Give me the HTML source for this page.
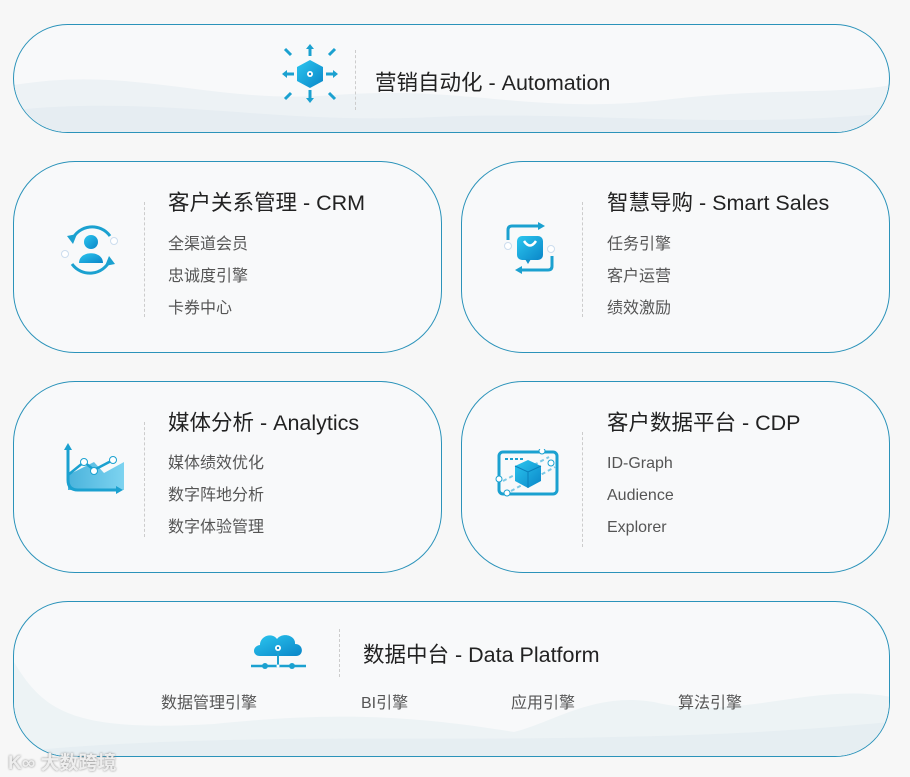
<!DOCTYPE html>
<html><head><meta charset="utf-8"><style>
body{margin:0;width:910px;height:777px;background:#f7f7f7;position:relative;overflow:hidden;font-family:"Liberation Sans","Noto Sans CJK SC",sans-serif;}
.card{position:absolute;box-sizing:border-box;border:1.5px solid #2b93ba;background:#f8f9fa;overflow:hidden}
.t{position:absolute;font-size:21.5px;color:#222;white-space:nowrap}
.i{position:absolute;font-size:16px;color:#555;line-height:32px;white-space:nowrap}
.sep{position:absolute;border-left:1.5px dashed #ccc;width:0}
svg{position:absolute}
</style></head><body>
<svg width="0" height="0"><defs>
<linearGradient id="g" x1="0" y1="0" x2="1" y2="1"><stop offset="0" stop-color="#2cc6ef"/><stop offset="1" stop-color="#0a86c8"/></linearGradient>
<linearGradient id="g2" x1="0" y1="0" x2="1" y2="0"><stop offset="0" stop-color="#4ab3dc"/><stop offset="1" stop-color="#7dd3f0"/></linearGradient>
</defs></svg>

<div class="card" style="left:13px;top:24px;width:877px;height:109px;border-radius:55px">
<svg width="877" height="109" style="left:0;top:0"><path d="M0 60 C120 40 200 80 320 70 C450 60 520 90 650 75 C760 62 820 70 877 60 L877 109 L0 109Z" fill="#edf2f5"/><path d="M0 85 C150 70 260 100 420 92 C560 85 700 105 877 88 L877 109 L0 109Z" fill="#e6edf2"/></svg>
</div>
<svg width="60" height="64" style="left:280px;top:42px" viewBox="0 0 60 64">
<g stroke="#1ba1d0" stroke-width="3" fill="#1ba1d0">
<line x1="30" y1="14" x2="30" y2="5"/><path d="M26 7 L30 2 L34 7Z" stroke="none"/>
<line x1="30" y1="48" x2="30" y2="58"/><path d="M26 56 L30 61 L34 56Z" stroke="none"/>
<line x1="14" y1="32" x2="5" y2="32"/><path d="M7 28 L2 32 L7 36Z" stroke="none"/>
<line x1="46" y1="32" x2="55" y2="32"/><path d="M53 28 L58 32 L53 36Z" stroke="none"/>
<line x1="11" y1="13" x2="5" y2="7"/><line x1="49" y1="13" x2="55" y2="7"/><line x1="11" y1="51" x2="5" y2="57"/><line x1="49" y1="51" x2="55" y2="57"/>
</g>
<path d="M30 18 L43 25 L43 39 L30 46 L17 39 L17 25Z" fill="url(#g)"/>
<circle cx="30" cy="32" r="3" fill="#fff"/><circle cx="30" cy="32" r="1.2" fill="#0a86c8"/>
</svg>
<div class="sep" style="left:355px;top:50px;height:60px"></div>
<div class="t" style="left:375px;top:66px">营销自动化 - Automation</div>

<div class="card" style="left:13px;top:161px;width:429px;height:192px;border-radius:62px"></div>
<svg width="66" height="60" style="left:58px;top:220px" viewBox="0 0 66 60">
<path d="M14 20 A22 22 0 0 1 52 16" fill="none" stroke="#1ba1d0" stroke-width="3"/>
<path d="M52 40 A22 22 0 0 1 14 44" fill="none" stroke="#1ba1d0" stroke-width="3"/>
<path d="M9 16 L15 24 L19 14Z" fill="#1ba1d0"/><path d="M57 44 L51 36 L47 46Z" fill="#1ba1d0"/>
<circle cx="33" cy="22" r="7" fill="url(#g)"/><path d="M21 43 C21 30 45 30 45 43Z" fill="url(#g)"/>
<circle cx="56" cy="21" r="3.5" fill="#fff" stroke="#cde"/><circle cx="7" cy="34" r="3.5" fill="#fff" stroke="#cde"/>
</svg>
<div class="sep" style="left:144px;top:202px;height:115px"></div>
<div class="t" style="left:168px;top:186px">客户关系管理 - CRM</div>
<div class="i" style="left:168px;top:229px">全渠道会员<br>忠诚度引擎<br>卡券中心</div>

<div class="card" style="left:461px;top:161px;width:429px;height:192px;border-radius:62px"></div>
<svg width="60" height="60" style="left:500px;top:218px" viewBox="0 0 60 60">
<path d="M8 22 V12 Q8 8 12 8 H40" fill="none" stroke="#1ba1d0" stroke-width="3"/><path d="M38 4 L45 8 L38 12Z" fill="#1ba1d0"/>
<path d="M52 38 V48 Q52 52 48 52 H20" fill="none" stroke="#1ba1d0" stroke-width="3"/><path d="M22 48 L15 52 L22 56Z" fill="#1ba1d0"/>
<rect x="17" y="18" width="26" height="24" rx="5" fill="url(#g)"/><path d="M25 41 L28 46 L31 41Z" fill="#1593cc"/>
<path d="M24 23 Q30 32 36 23" fill="none" stroke="#fff" stroke-width="2.5"/>
<circle cx="8" cy="28" r="3.5" fill="#fff" stroke="#cde"/><circle cx="51" cy="31" r="3.5" fill="#fff" stroke="#cde"/>
</svg>
<div class="sep" style="left:582px;top:202px;height:115px"></div>
<div class="t" style="left:607px;top:186px">智慧导购 - Smart Sales</div>
<div class="i" style="left:607px;top:229px">任务引擎<br>客户运营<br>绩效激励</div>

<div class="card" style="left:13px;top:381px;width:429px;height:192px;border-radius:62px"></div>
<svg width="70" height="60" style="left:58px;top:440px" viewBox="0 0 70 60">
<path d="M10 35 L36 22 L46 33 L66 22 L66 50 L10 50Z" fill="url(#g2)"/>
<path d="M10 8 V40 Q10 50 20 50 H60" fill="none" stroke="#1ba1d0" stroke-width="3"/>
<path d="M6 10 L10 3 L14 10Z" fill="#1ba1d0"/><path d="M58 46 L65 50 L58 54Z" fill="#1ba1d0"/>
<path d="M10 35 L26 22 L36 30 L55 20" fill="none" stroke="#1ba1d0" stroke-width="2.5"/>
<circle cx="26" cy="22" r="3.5" fill="#fff" stroke="#1ba1d0"/><circle cx="36" cy="31" r="3.5" fill="#fff" stroke="#1ba1d0"/><circle cx="55" cy="20" r="3.5" fill="#fff" stroke="#1ba1d0"/>
</svg>
<div class="sep" style="left:144px;top:422px;height:115px"></div>
<div class="t" style="left:168px;top:406px">媒体分析 - Analytics</div>
<div class="i" style="left:168px;top:448px">媒体绩效优化<br>数字阵地分析<br>数字体验管理</div>

<div class="card" style="left:461px;top:381px;width:429px;height:192px;border-radius:62px"></div>
<svg width="66" height="52" style="left:495px;top:449px" viewBox="0 0 66 52">
<rect x="4" y="3" width="58" height="42" rx="4" fill="none" stroke="#1ba1d0" stroke-width="3"/>
<g fill="#1ba1d0"><rect x="10" y="9" width="3" height="2"/><rect x="15" y="9" width="3" height="2"/><rect x="20" y="9" width="3" height="2"/><rect x="25" y="9" width="3" height="2"/></g>
<path d="M8 32 L54 8 M16 42 L60 18" stroke="#7cc9e6" stroke-width="2" stroke-dasharray="4 3"/>
<path d="M33 11 L46 17 L46 32 L33 39 L20 32 L20 17Z" fill="url(#g)"/><path d="M20 17 L33 23 L46 17 M33 23 V39" stroke="#0a7fba" stroke-width="1" fill="none"/>
<circle cx="47" cy="2" r="3" fill="#fff" stroke="#1ba1d0"/><circle cx="56" cy="14" r="3" fill="#fff" stroke="#1ba1d0"/><circle cx="4" cy="30" r="3" fill="#fff" stroke="#1ba1d0"/><circle cx="12" cy="44" r="3" fill="#fff" stroke="#1ba1d0"/>
</svg>
<div class="sep" style="left:582px;top:432px;height:115px"></div>
<div class="t" style="left:607px;top:406px">客户数据平台 - CDP</div>
<div class="i" style="left:607px;top:448px">ID-Graph<br>Audience<br>Explorer</div>

<div class="card" style="left:13px;top:601px;width:877px;height:156px;border-radius:55px">
<svg width="877" height="156" style="left:0;top:0"><path d="M0 60 C30 110 60 130 200 122 C300 112 380 110 500 130 C540 120 580 90 640 100 C720 120 800 80 877 95 L877 156 L0 156Z" fill="#edf3f5"/><path d="M0 150 C200 130 400 140 600 135 C750 132 820 125 877 120 L877 156 L0 156Z" fill="#e6eef2"/></svg>
</div>
<svg width="60" height="40" style="left:250px;top:632px" viewBox="0 0 60 40">
<path d="M10 24 C2 24 2 14 10 13 C10 4 22 0 27 7 C32 0 46 3 45 12 C54 12 54 24 46 24Z" fill="url(#g)"/>
<circle cx="28" cy="16" r="3" fill="#fff"/><circle cx="28" cy="16" r="1.2" fill="#0a86c8"/>
<line x1="28" y1="19" x2="28" y2="34" stroke="#1ba1d0" stroke-width="2"/>
<line x1="1" y1="34" x2="56" y2="34" stroke="#1ba1d0" stroke-width="2.5"/>
<circle cx="15" cy="34" r="3" fill="#1ba1d0"/><circle cx="42" cy="34" r="3" fill="#1ba1d0"/><circle cx="28" cy="34" r="1.5" fill="#fff"/>
</svg>
<div class="sep" style="left:339px;top:629px;height:48px"></div>
<div class="t" style="left:363px;top:638px">数据中台 - Data Platform</div>
<div class="i" style="left:161px;top:688px">数据管理引擎</div>
<div class="i" style="left:361px;top:688px">BI引擎</div>
<div class="i" style="left:511px;top:688px">应用引擎</div>
<div class="i" style="left:678px;top:688px">算法引擎</div>
<div style="position:absolute;left:8px;top:748px;font-size:19px;font-weight:bold;color:#eee;text-shadow:0 0 2px #888;white-space:nowrap">K∞ 大数跨境</div>
</body></html>
